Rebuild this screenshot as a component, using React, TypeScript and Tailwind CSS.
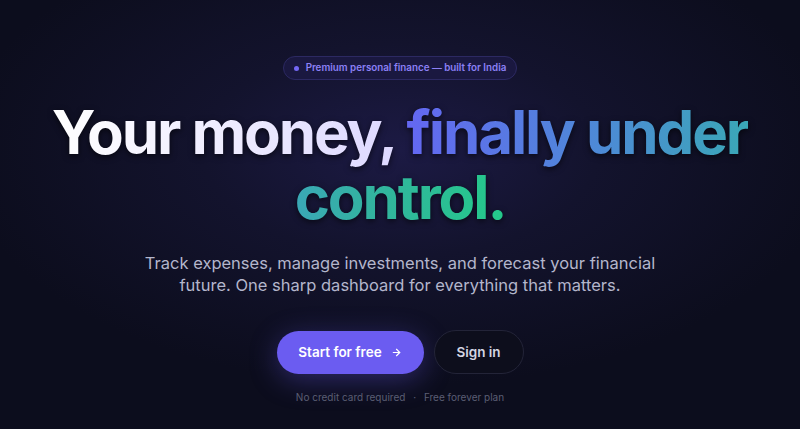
import React from "react";

const App: React.FC = () => {
  return (
    <div
      className="relative min-h-screen w-full overflow-hidden bg-[#0c0d1d] text-white"
      style={{ fontFamily: "Inter, 'Noto Sans', sans-serif" }}
    >
      <div className="pointer-events-none absolute inset-0 bg-[radial-gradient(ellipse_55%_55%_at_50%_35%,#1c1a44_0%,#13132d_45%,rgba(12,13,29,0)_100%)]" />

      <main className="relative flex flex-col items-center pt-[56px] text-center">
        <div className="flex h-[24px] items-center gap-[7px] rounded-full border border-[#2c2962] bg-[#1a1840] px-[10px] text-[9.8px] font-semibold text-[#8c80f6]">
          <span className="h-[5px] w-[5px] rounded-full bg-[#7467f4]" />
          Premium personal finance — built for India
        </div>

        <h1 className="mt-[20px] text-[60px] font-bold leading-[65px] tracking-[-0.035em] [filter:drop-shadow(0_2px_3px_rgba(0,0,0,0.6))]">
          <span className="bg-gradient-to-r from-white to-[#ded9ff] bg-clip-text text-transparent">
            Your money,
          </span>{" "}
          <span className="bg-[linear-gradient(90deg,#6467f2_0%,#4d8ad6_35%,#3aa8b6_62%,#33b2a0_75%,#24c98a_100%)] bg-clip-text text-transparent">
            finally under control.
          </span>
        </h1>

        <p className="mt-[22px] max-w-[530px] text-[16.5px] leading-[22px] text-[#b4b6cc]">
          Track expenses, manage investments, and forecast your financial future. One sharp dashboard for everything that matters.
        </p>

        <div className="mt-[34px] flex items-center gap-[10px]">
          <button className="flex h-[43px] w-[147px] items-center justify-center gap-[9px] rounded-full bg-[#6b5cf1] text-[13.5px] font-semibold text-white shadow-[0_6px_28px_rgba(107,92,241,0.35)]">
            Start for free
            <svg width="11" height="11" viewBox="0 0 24 24" fill="none" stroke="currentColor" strokeWidth="2.6" strokeLinecap="round" strokeLinejoin="round">
              <path d="M5 12h14" />
              <path d="m12 5 7 7-7 7" />
            </svg>
          </button>
          <button className="flex h-[44px] w-[90px] items-center justify-center rounded-full border border-[#232438] bg-[#0d0e1c] text-[13.5px] font-semibold text-[#d4d5e2]">
            Sign in
          </button>
        </div>

        <p className="mt-[16px] text-[10px] leading-[15px] text-[#5b5e74]">
          No credit card required <span className="mx-[5px]">·</span> Free forever plan
        </p>
      </main>
    </div>
  );
};

export default App;
